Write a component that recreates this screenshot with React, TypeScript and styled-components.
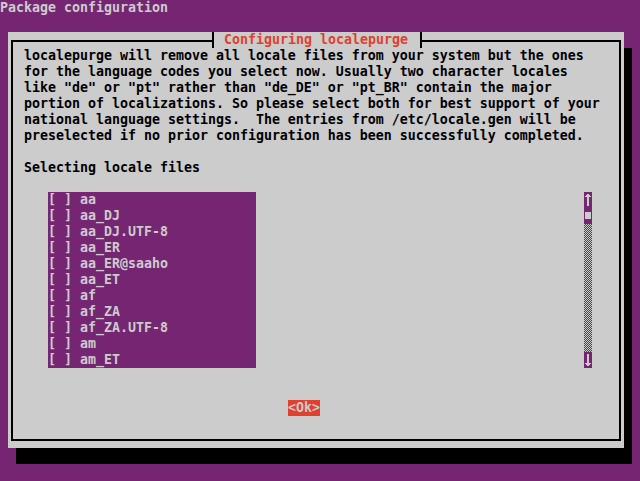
import React from "react";
import styled, { createGlobalStyle } from "styled-components";

const PURPLE = "#762572";
const GREY = "#cccccc";
const RED = "#e0402c";

const Global = createGlobalStyle`
  html, body { margin: 0; padding: 0; background: ${PURPLE}; }
  body { width: 640px; height: 481px; overflow: hidden; }
  * { box-sizing: border-box; }
`;

const Screen = styled.div`
  width: 640px;
  height: 481px;
  background: ${PURPLE};
  font-family: "DejaVu Sans Mono", "Liberation Mono", monospace;
  font-size: 13.29px;
  font-weight: bold;
  line-height: 16px;
  white-space: pre;
  overflow: hidden;
`;

const TopBar = styled.div`
  height: 16px;
  color: ${GREY};
`;

const Dialog = styled.div`
  margin: 16px 0 0 8px;
  width: 616px;
  height: 416px;
  background: ${GREY};
  box-shadow: 8px 16px 0 #000;
  display: flex;
  flex-direction: column;
`;

const Frame = styled.div`
  position: relative;
  flex: 1;
  margin: 8px 3px 7px 3px;
  border: 2px solid #000;
  padding-top: 6px;
  color: #000;
  display: flex;
  flex-direction: column;
`;

const TitleWrap = styled.div`
  position: absolute;
  top: -10px;
  left: 0;
  right: 0;
  margin: 0 auto;
  width: max-content;
  display: flex;
  background: ${GREY};
`;

const Tee = styled.span<{ $side: "left" | "right" }>`
  position: relative;
  width: 8px;
  height: 16px;
  &::before {
    content: "";
    position: absolute;
    left: 4px;
    top: 0;
    width: 2px;
    height: 16px;
    background: #000;
  }
  &::after {
    content: "";
    position: absolute;
    top: 8px;
    height: 2px;
    ${(p) => (p.$side === "left" ? "left: 0; width: 4px;" : "left: 6px; width: 2px;")}
    background: #000;
  }
`;

const TitleLabel = styled.span`
  color: ${RED};
  height: 16px;
`;

const Prose = styled.div`
  padding-left: 11px;
`;

const Line = styled.div`
  height: 16px;
`;

const ListRow = styled.div`
  display: flex;
  justify-content: space-between;
  padding: 0 27px 0 35px;
  margin-top: 16px;
`;

const List = styled.div`
  width: 208px;
  background: ${PURPLE};
  color: ${GREY};
`;

const Scrollbar = styled.div`
  width: 8px;
  display: flex;
  flex-direction: column;
  background: ${PURPLE};
`;

const ScrollCell = styled.div`
  width: 8px;
  height: 16px;
  display: flex;
  align-items: flex-start;
  justify-content: center;
`;

const ThumbBlock = styled.div`
  width: 6px;
  height: 7px;
  margin-top: 4px;
  background: ${GREY};
`;

const Checker = styled.div`
  height: 128px;
  background: repeating-conic-gradient(${PURPLE} 0 25%, ${GREY} 0 50%) 0 0 / 2px 2px;
`;

const ButtonRow = styled.div`
  margin-top: 32px;
  padding-left: 275px;
  display: flex;
`;

const OkButton = styled.span`
  background: ${RED};
  color: ${GREY};
  height: 16px;
`;

const Arrow = ({ dir }: { dir: "up" | "down" }) => (
  <svg width="8" height="16" viewBox="0 0 8 16" shapeRendering="crispEdges">
    {dir === "up" ? (
      <g fill={GREY}>
        <rect x="3" y="2" width="2" height="1" />
        <rect x="2" y="3" width="4" height="1" />
        <rect x="1" y="4" width="6" height="1" />
        <rect x="3" y="5" width="2" height="9" />
      </g>
    ) : (
      <g fill={GREY}>
        <rect x="3" y="2" width="2" height="9" />
        <rect x="1" y="11" width="6" height="1" />
        <rect x="2" y="12" width="4" height="1" />
        <rect x="3" y="13" width="2" height="1" />
      </g>
    )}
  </svg>
);

const prose = [
  "localepurge will remove all locale files from your system but the ones",
  "for the language codes you select now. Usually two character locales",
  'like "de" or "pt" rather than "de_DE" or "pt_BR" contain the major',
  "portion of localizations. So please select both for best support of your",
  "national language settings.  The entries from /etc/locale.gen will be",
  "preselected if no prior configuration has been successfully completed.",
  "",
  "Selecting locale files",
];

const locales = [
  "aa",
  "aa_DJ",
  "aa_DJ.UTF-8",
  "aa_ER",
  "aa_ER@saaho",
  "aa_ET",
  "af",
  "af_ZA",
  "af_ZA.UTF-8",
  "am",
  "am_ET",
];

export default function App() {
  return (
    <Screen>
      <Global />
      <TopBar>Package configuration</TopBar>
      <Dialog>
        <Frame>
          <TitleWrap>
            <Tee $side="left" />
            <TitleLabel> Configuring localepurge </TitleLabel>
            <Tee $side="right" />
          </TitleWrap>
          <Prose>
            {prose.map((t, i) => (
              <Line key={i}>{t}</Line>
            ))}
          </Prose>
          <ListRow>
            <List>
              {locales.map((l) => (
                <Line key={l}>{`[ ] ${l}`}</Line>
              ))}
            </List>
            <Scrollbar>
              <ScrollCell>
                <Arrow dir="up" />
              </ScrollCell>
              <ScrollCell>
                <ThumbBlock />
              </ScrollCell>
              <Checker />
              <ScrollCell>
                <Arrow dir="down" />
              </ScrollCell>
            </Scrollbar>
          </ListRow>
          <ButtonRow>
            <OkButton>{"<Ok>"}</OkButton>
          </ButtonRow>
        </Frame>
      </Dialog>
    </Screen>
  );
}
